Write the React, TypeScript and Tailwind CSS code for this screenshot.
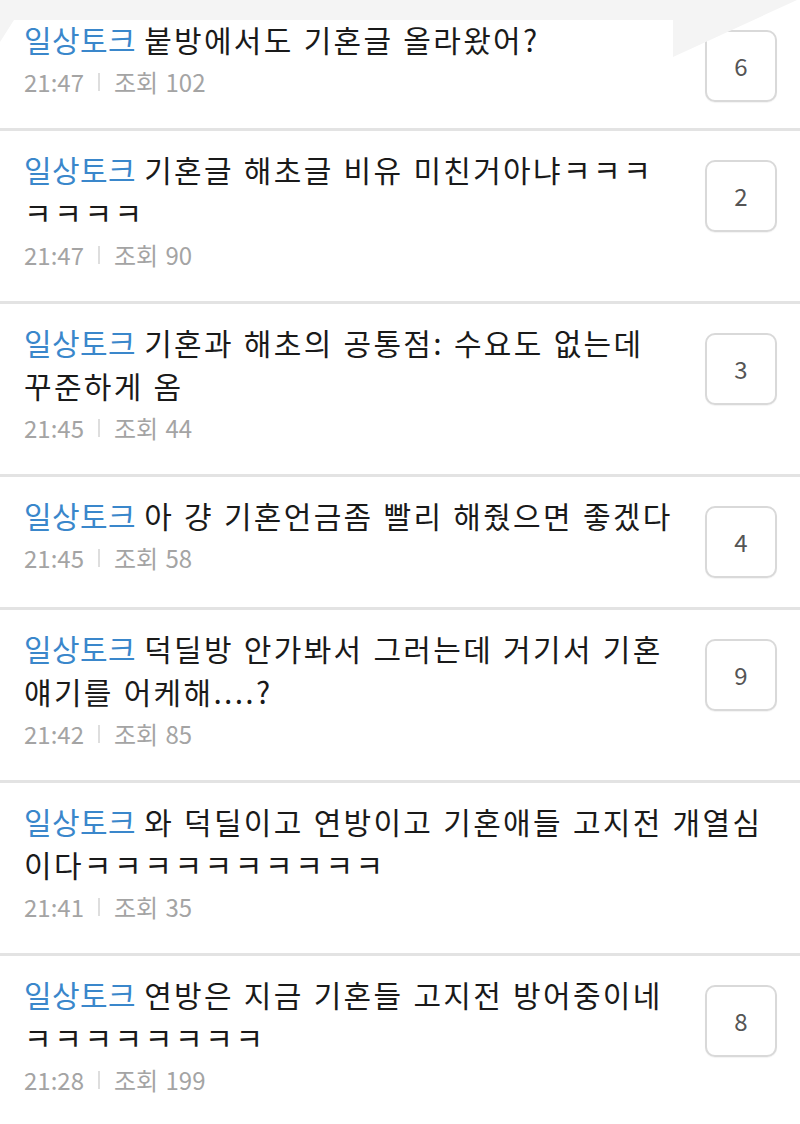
import React from "react";

type Post = { lines: string[]; time: string; views: string; count?: string };

const posts: Post[] = [
  { lines: ["붙방에서도 기혼글 올라왔어?"], time: "21:47", views: "102", count: "6" },
  { lines: ["기혼글 해초글 비유 미친거아냐ㅋㅋㅋ", "ㅋㅋㅋㅋ"], time: "21:47", views: "90", count: "2" },
  { lines: ["기혼과 해초의 공통점: 수요도 없는데", "꾸준하게 옴"], time: "21:45", views: "44", count: "3" },
  { lines: ["아 걍 기혼언금좀 빨리 해줬으면 좋겠다"], time: "21:45", views: "58", count: "4" },
  { lines: ["덕딜방 안가봐서 그러는데 거기서 기혼", "얘기를 어케해....?"], time: "21:42", views: "85", count: "9" },
  { lines: ["와 덕딜이고 연방이고 기혼애들 고지전 개열심", "이다ㅋㅋㅋㅋㅋㅋㅋㅋㅋㅋ"], time: "21:41", views: "35" },
  { lines: ["연방은 지금 기혼들 고지전 방어중이네", "ㅋㅋㅋㅋㅋㅋㅋㅋ"], time: "21:28", views: "199", count: "8" },
];

function Line({ text }: { text: string }) {
  const parts = text.split(/(ㅋ+)/);
  return (
    <>
      {parts.map((s, i) =>
        s.startsWith("ㅋ") ? (
          <span key={i} className="tracking-[2.6px]">
            {s}
          </span>
        ) : (
          <React.Fragment key={i}>{s}</React.Fragment>
        )
      )}
    </>
  );
}

function Row({ p, first }: { p: Post; first?: boolean }) {
  return (
    <div
      className={
        "relative flex items-start bg-white border-b-[3px] border-[#e3e3e3] pl-[24px] pr-[23px] " +
        (first ? "pt-[18px] pb-[26px]" : "pt-[17px] pb-[29px]")
      }
    >
      <div className="flex-1 min-w-0">
        <div className="text-[30px] leading-[43px] text-[#1a1a1a] tracking-[2.3px] [word-spacing:1px] whitespace-nowrap">
          {p.lines.map((l, i) => (
            <div key={i}>
              {i === 0 && (
                <span className="text-[#3a87cb] tracking-[0.4px]">일상토크 </span>
              )}
              <Line text={l} />
            </div>
          ))}
        </div>
        <div className="mt-[4px] flex items-center text-[24px] leading-[34px] text-[#a4a4a4]">
          <span>{p.time}</span>
          <span className="mx-[14px] inline-block h-[18px] w-[2px] bg-[#dedede]" />
          <span className="[word-spacing:2px]">조회 {p.views}</span>
        </div>
      </div>
      {p.count && (
        <div className="mt-[12px] flex h-[72px] w-[72px] shrink-0 items-center justify-center rounded-[10px] border-2 border-[#d9d9d9] bg-white text-[24px] text-[#555] shadow-[0_1px_1px_rgba(0,0,0,0.05)]">
          {p.count}
        </div>
      )}
    </div>
  );
}

export default function App() {
  return (
    <div
      className="relative w-[800px] h-[1124px] overflow-hidden bg-white"
      style={{ fontFamily: '"Noto Sans CJK KR", "Noto Sans", sans-serif' }}
    >
      <div className="relative">
        {posts.map((p, i) => (
          <Row key={i} p={p} first={i === 0} />
        ))}
      </div>
      <svg
        className="absolute left-0 top-0 pointer-events-none"
        width="800"
        height="60"
        viewBox="0 0 800 60"
      >
        <polygon points="0,0 797,0 673,57 673,20 14,20 0,42" fill="#f4f4f4" />
      </svg>
    </div>
  );
}
